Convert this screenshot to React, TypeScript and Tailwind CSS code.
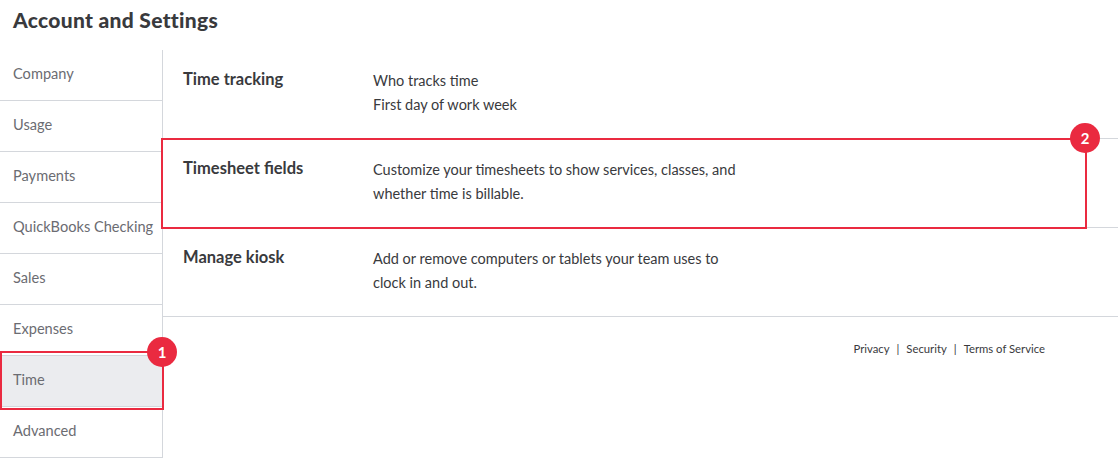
import React from "react";

const sideItems = [
  "Company",
  "Usage",
  "Payments",
  "QuickBooks Checking",
  "Sales",
  "Expenses",
  "Time",
  "Advanced",
];

const sections = [
  { title: "Time tracking", lines: ["Who tracks time", "First day of work week"] },
  {
    title: "Timesheet fields",
    lines: ["Customize your timesheets to show services, classes, and", "whether time is billable."],
  },
  {
    title: "Manage kiosk",
    lines: ["Add or remove computers or tablets your team uses to", "clock in and out."],
  },
];

export default function App() {
  return (
    <div
      className="relative w-[1118px] h-[461px] overflow-hidden bg-white text-[#393a3d]"
      style={{ fontFamily: "Lato, 'Open Sans', sans-serif" }}
    >
      <div className="h-[50px] px-[13px] pt-[8px]">
        <h1 className="text-[21px] leading-[24px] font-black tracking-[0.3px] text-[#393a3d]">Account and Settings</h1>
      </div>
      <div className="flex">
        <div className="w-[163px] border-r border-[#d4d7dc] shrink-0">
          {sideItems.map((s) => (
            <div
              key={s}
              className={`h-[51px] border-b border-[#d4d7dc] pl-[13px] pb-[3px] flex items-center text-[14.6px] text-[#6b6c72] ${
                s === "Time" ? "bg-[#ebecef]" : ""
              }`}
            >
              {s}
            </div>
          ))}
        </div>
        <div className="flex-1">
          {sections.map((sec) => (
            <div key={sec.title} className="h-[89px] border-b border-[#d4d7dc] flex pl-[20px] pt-[19px]">
              <div className="w-[190px] text-[16.5px] leading-[20px] font-bold text-[#393a3d]">{sec.title}</div>
              <div className="text-[14.5px] leading-[24px] text-[#393a3d]">
                {sec.lines.map((l) => (
                  <div key={l}>{l}</div>
                ))}
              </div>
            </div>
          ))}
          <div className="flex justify-end pr-[73px] pt-[25px] text-[11.3px] leading-[14px] text-[#393a3d]">
            <span>Privacy</span>
            <span className="px-[7px]">|</span>
            <span>Security</span>
            <span className="px-[7px]">|</span>
            <span>Terms of Service</span>
          </div>
        </div>
      </div>

      <div className="absolute left-0 top-[351px] w-[164px] h-[59px] border-2 border-[#ea2a40]" />
      <div className="absolute left-[161px] top-[138px] w-[926px] h-[91px] border-2 border-[#ea2a40]" />
      <div className="absolute left-[147px] top-[337px] w-[30px] h-[30px] rounded-full bg-[#ea2a40] text-white text-[15px] font-bold flex items-center justify-center">
        1
      </div>
      <div className="absolute left-[1070px] top-[123px] w-[30px] h-[30px] rounded-full bg-[#ea2a40] text-white text-[15px] font-bold flex items-center justify-center">
        2
      </div>
    </div>
  );
}
